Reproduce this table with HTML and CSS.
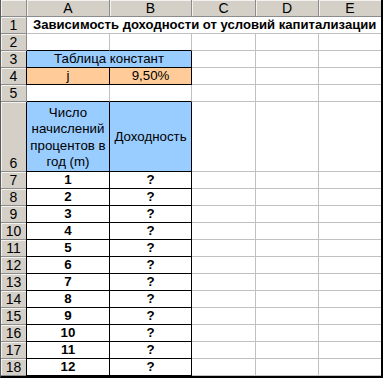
FILE: index.html
```html
<!DOCTYPE html>
<html lang="ru">
<head>
<meta charset="utf-8">
<link rel="stylesheet" href="styles.css">
</head>
<body>
<div class="sheet">
  <div class="corner"></div>
  <div class="ch">A</div><div class="ch">B</div><div class="ch">C</div><div class="ch">D</div><div class="ch last">E</div>

  <div class="rh">1</div>
  <div class="c title span5 last">Зависимость доходности от условий капитализации</div>

  <div class="rh">2</div>
  <div class="c bb"></div><div class="c bb"></div><div class="c"></div><div class="c"></div><div class="c last"></div>

  <div class="rh">3</div>
  <div class="c span2 blue bl br bb center">Таблица констант</div><div class="c"></div><div class="c"></div><div class="c last"></div>

  <div class="rh">4</div>
  <div class="c orange bl br bb center">j</div><div class="c orange br bb center">9,50%</div><div class="c"></div><div class="c"></div><div class="c last"></div>

  <div class="rh">5</div>
  <div class="c bb"></div><div class="c bb"></div><div class="c"></div><div class="c"></div><div class="c last"></div>

  <div class="rh bottom">6</div>
  <div class="c blue bl br bb wrap">Число<br>начислений<br>процентов в<br>год (m)</div><div class="c blue br bb center">Доходность</div><div class="c"></div><div class="c"></div><div class="c last"></div>

  <div class="rh">7</div><div class="c bl br bb center b">1</div><div class="c br bb center b">?</div><div class="c"></div><div class="c"></div><div class="c last"></div>
  <div class="rh">8</div><div class="c bl br bb center b">2</div><div class="c br bb center b">?</div><div class="c"></div><div class="c"></div><div class="c last"></div>
  <div class="rh">9</div><div class="c bl br bb center b">3</div><div class="c br bb center b">?</div><div class="c"></div><div class="c"></div><div class="c last"></div>
  <div class="rh">10</div><div class="c bl br bb center b">4</div><div class="c br bb center b">?</div><div class="c"></div><div class="c"></div><div class="c last"></div>
  <div class="rh">11</div><div class="c bl br bb center b">5</div><div class="c br bb center b">?</div><div class="c"></div><div class="c"></div><div class="c last"></div>
  <div class="rh">12</div><div class="c bl br bb center b">6</div><div class="c br bb center b">?</div><div class="c"></div><div class="c"></div><div class="c last"></div>
  <div class="rh">13</div><div class="c bl br bb center b">7</div><div class="c br bb center b">?</div><div class="c"></div><div class="c"></div><div class="c last"></div>
  <div class="rh">14</div><div class="c bl br bb center b">8</div><div class="c br bb center b">?</div><div class="c"></div><div class="c"></div><div class="c last"></div>
  <div class="rh">15</div><div class="c bl br bb center b">9</div><div class="c br bb center b">?</div><div class="c"></div><div class="c"></div><div class="c last"></div>
  <div class="rh">16</div><div class="c bl br bb center b">10</div><div class="c br bb center b">?</div><div class="c"></div><div class="c"></div><div class="c last"></div>
  <div class="rh">17</div><div class="c bl br bb center b">11</div><div class="c br bb center b">?</div><div class="c"></div><div class="c"></div><div class="c last"></div>
  <div class="rh">18</div><div class="c bl br bb center b">12</div><div class="c br bb center b">?</div><div class="c"></div><div class="c"></div><div class="c last"></div>
</div>
</body>
</html>
```

FILE: styles.css
```css
html, body {
  margin: 0;
  padding: 0;
  background: #ffffff;
}
body {
  font-family: "Liberation Sans", Arial, sans-serif;
  font-size: 13.3px;
  color: #000;
}
.sheet {
  width: 383px;
  height: 378px;
  box-sizing: border-box;
  border-left: 1px solid #5a5a5a;
  border-right: 2px solid #000;
  border-bottom: 2px solid #000;
  display: grid;
  grid-template-columns: 26px 83px 82px 64px 63px 62px;
  grid-template-rows: 17px 17px 17px 17px 17px 17px 70px repeat(12, 17px);
  overflow: hidden;
}
.corner, .ch, .rh {
  background: #d4d0c8;
  box-sizing: border-box;
  border-right: 1px solid #8c8c8c;
  border-bottom: 1px solid #8c8c8c;
  box-shadow: inset 1px 1px 0 #f4f2ee;
  display: flex;
  align-items: center;
  justify-content: center;
  line-height: 16px;
  font-size: 14px;
}
.ch.last { border-right: none; }
.rh.bottom { align-items: flex-end; }
.c {
  box-sizing: border-box;
  border-right: 1px solid #c0c0c0;
  border-bottom: 1px solid #c0c0c0;
  line-height: 16px;
  white-space: nowrap;
  position: relative;
}
.c.last { border-right: none; }
.span5 { grid-column: span 5; }
.span2 { grid-column: span 2; }
.title {
  font-weight: bold;
  font-size: 13.1px;
  padding-left: 6px;
  overflow: visible;
}
.center {
  display: flex;
  align-items: center;
  justify-content: center;
}
.wrap {
  display: flex;
  align-items: center;
  justify-content: center;
  text-align: center;
  line-height: 16.5px;
  padding-top: 2px;
}
.b { font-weight: bold; }
.blue { background: #99ccff; }
.orange { background: #ffcc99; }
.br { border-right-color: #000; }
.bb { border-bottom-color: #000; }
.bl { box-shadow: -1px 0 0 #000; }
```
